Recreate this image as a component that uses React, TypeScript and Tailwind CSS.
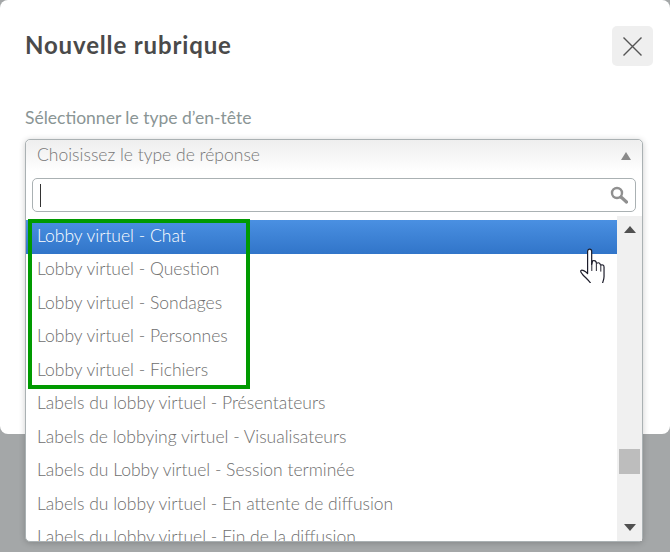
const options = [
  'Lobby virtuel - Chat',
  'Lobby virtuel - Question',
  'Lobby virtuel - Sondages',
  'Lobby virtuel - Personnes',
  'Lobby virtuel - Fichiers',
  'Labels du lobby virtuel - Présentateurs',
  'Labels de lobbying virtuel - Visualisateurs',
  'Labels du Lobby virtuel - Session terminée',
  'Labels du lobby virtuel - En attente de diffusion',
  'Labels du lobby virtuel - Fin de la diffusion',
];

function HandCursor() {
  return (
    <svg width="30" height="36" viewBox="2 0 24 30" className="absolute left-[578px] top-[247px]">
      <path
        d="M9.5 3.5c0-2.4 3.4-2.4 3.4 0v11l.8-3c1.6-.6 3 .2 3 1.6l.4.4c1.4-.8 3-.2 3 1.3l.3.3c1.4-.6 2.8 0 2.8 1.5v8c0 2.5-1 4-1.4 6.3H12.5c-1.4-2.6-4.2-4.8-7.2-8-1-1.1-2.1-2.3-1.4-3.2.9-1 3.4.2 5.6 2.4V3.5Z"
        fill="#fff"
        stroke="#1d1d2b"
        strokeWidth="1"
        strokeLinejoin="round"
      />
      <path d="M13 13v7M16.8 13.5v6.5M20.5 15.5v5" stroke="#1d1d2b" strokeWidth="0.8" fill="none" />
    </svg>
  );
}

export default function App() {
  return (
    <div className="relative h-[552px] w-[670px] overflow-hidden bg-[#a4a7a8] font-['Lato',sans-serif]">
      {/* Modal */}
      <div className="h-[434px] w-[670px] rounded-lg bg-white px-[25px] pt-[26px]">
        <div className="flex items-start justify-between">
          <h2 className="mt-[4px] text-[24px] leading-[30px] font-bold tracking-[0.85px] text-[#4a4a4a]">Nouvelle rubrique</h2>
          <button className="mr-[-8px] flex h-10 w-[41px] items-center justify-center rounded-[5px] bg-[#efefef]">
            <svg width="21" height="21" viewBox="0 0 21 21">
              <path d="M1.5 1.5l18 18M19.5 1.5l-18 18" stroke="#555" strokeWidth="1.4" fill="none" />
            </svg>
          </button>
        </div>

        <label className="mt-[40px] block text-[17.5px] leading-6 text-[#8a9595]">Sélectionner le type d’en-tête</label>
      </div>

      {/* Opened select */}
      <div className="absolute left-[25px] top-[139px] flex h-[403px] w-[618px] flex-col rounded-[5px] border border-[#aab1b3] bg-white shadow-[0_1px_6px_rgba(0,0,0,0.2)]">
        <div className="flex h-[32px] items-start justify-between rounded-t-[5px] bg-gradient-to-b from-[#eeeeee] to-white pl-[11px] pr-[11px]">
          <span className="text-[17.5px] leading-[29px] font-light text-[#777]">Choisissez le type de réponse</span>
          <span className="mt-[12px] h-0 w-0 border-x-[5px] border-b-[8px] border-x-transparent border-b-[#8a8a8a]"></span>
        </div>

        <div className="mx-[6px] mt-[6px] flex h-[34px] items-center justify-between rounded-[5px] border border-[#aab1b3] bg-white pl-[7px] pr-[7px]">
          <span className="h-[23px] w-px bg-[#333]"></span>
          <svg width="18" height="18" viewBox="0 0 18 18">
            <circle cx="7" cy="7" r="5" fill="none" stroke="#909090" strokeWidth="2.4" />
            <path d="M11 11l5.5 5" stroke="#909090" strokeWidth="3.2" strokeLinecap="round" />
          </svg>
        </div>

        <div className="mt-[4px] flex min-h-0 flex-1">
          <ul className="mt-[4px] min-w-0 flex-1 overflow-hidden">
            {options.map((option, i) => (
              <li
                key={option}
                className={
                  i === 0
                    ? 'h-[34px] bg-gradient-to-b from-[#4a90e2] to-[#3175c9] pl-[11px] text-[17.5px] leading-[32px] font-light whitespace-nowrap text-white'
                    : 'h-[33.5px] pl-[11px] text-[17.5px] leading-[30px] font-light whitespace-nowrap text-[#6e6e6e]'
                }
              >
                {option}
              </li>
            ))}
          </ul>

          {/* Scrollbar */}
          <div className="flex h-full w-[25px] flex-col items-center justify-between bg-[#f0f0f0] pt-[10px] pb-[10px]">
            <span className="h-0 w-0 border-x-[6px] border-b-[7px] border-x-transparent border-b-[#505050]"></span>
            <span className="mt-auto mb-[50px] h-[25px] w-[21px] bg-[#bdbdbd]"></span>
            <span className="h-0 w-0 border-x-[6px] border-t-[7px] border-x-transparent border-t-[#505050]"></span>
          </div>
        </div>
      </div>

      {/* Annotation */}
      <div className="absolute left-[28px] top-[219px] h-[170px] w-[222px] border-[4px] border-[#009a00]"></div>

      <HandCursor />
    </div>
  );
}
